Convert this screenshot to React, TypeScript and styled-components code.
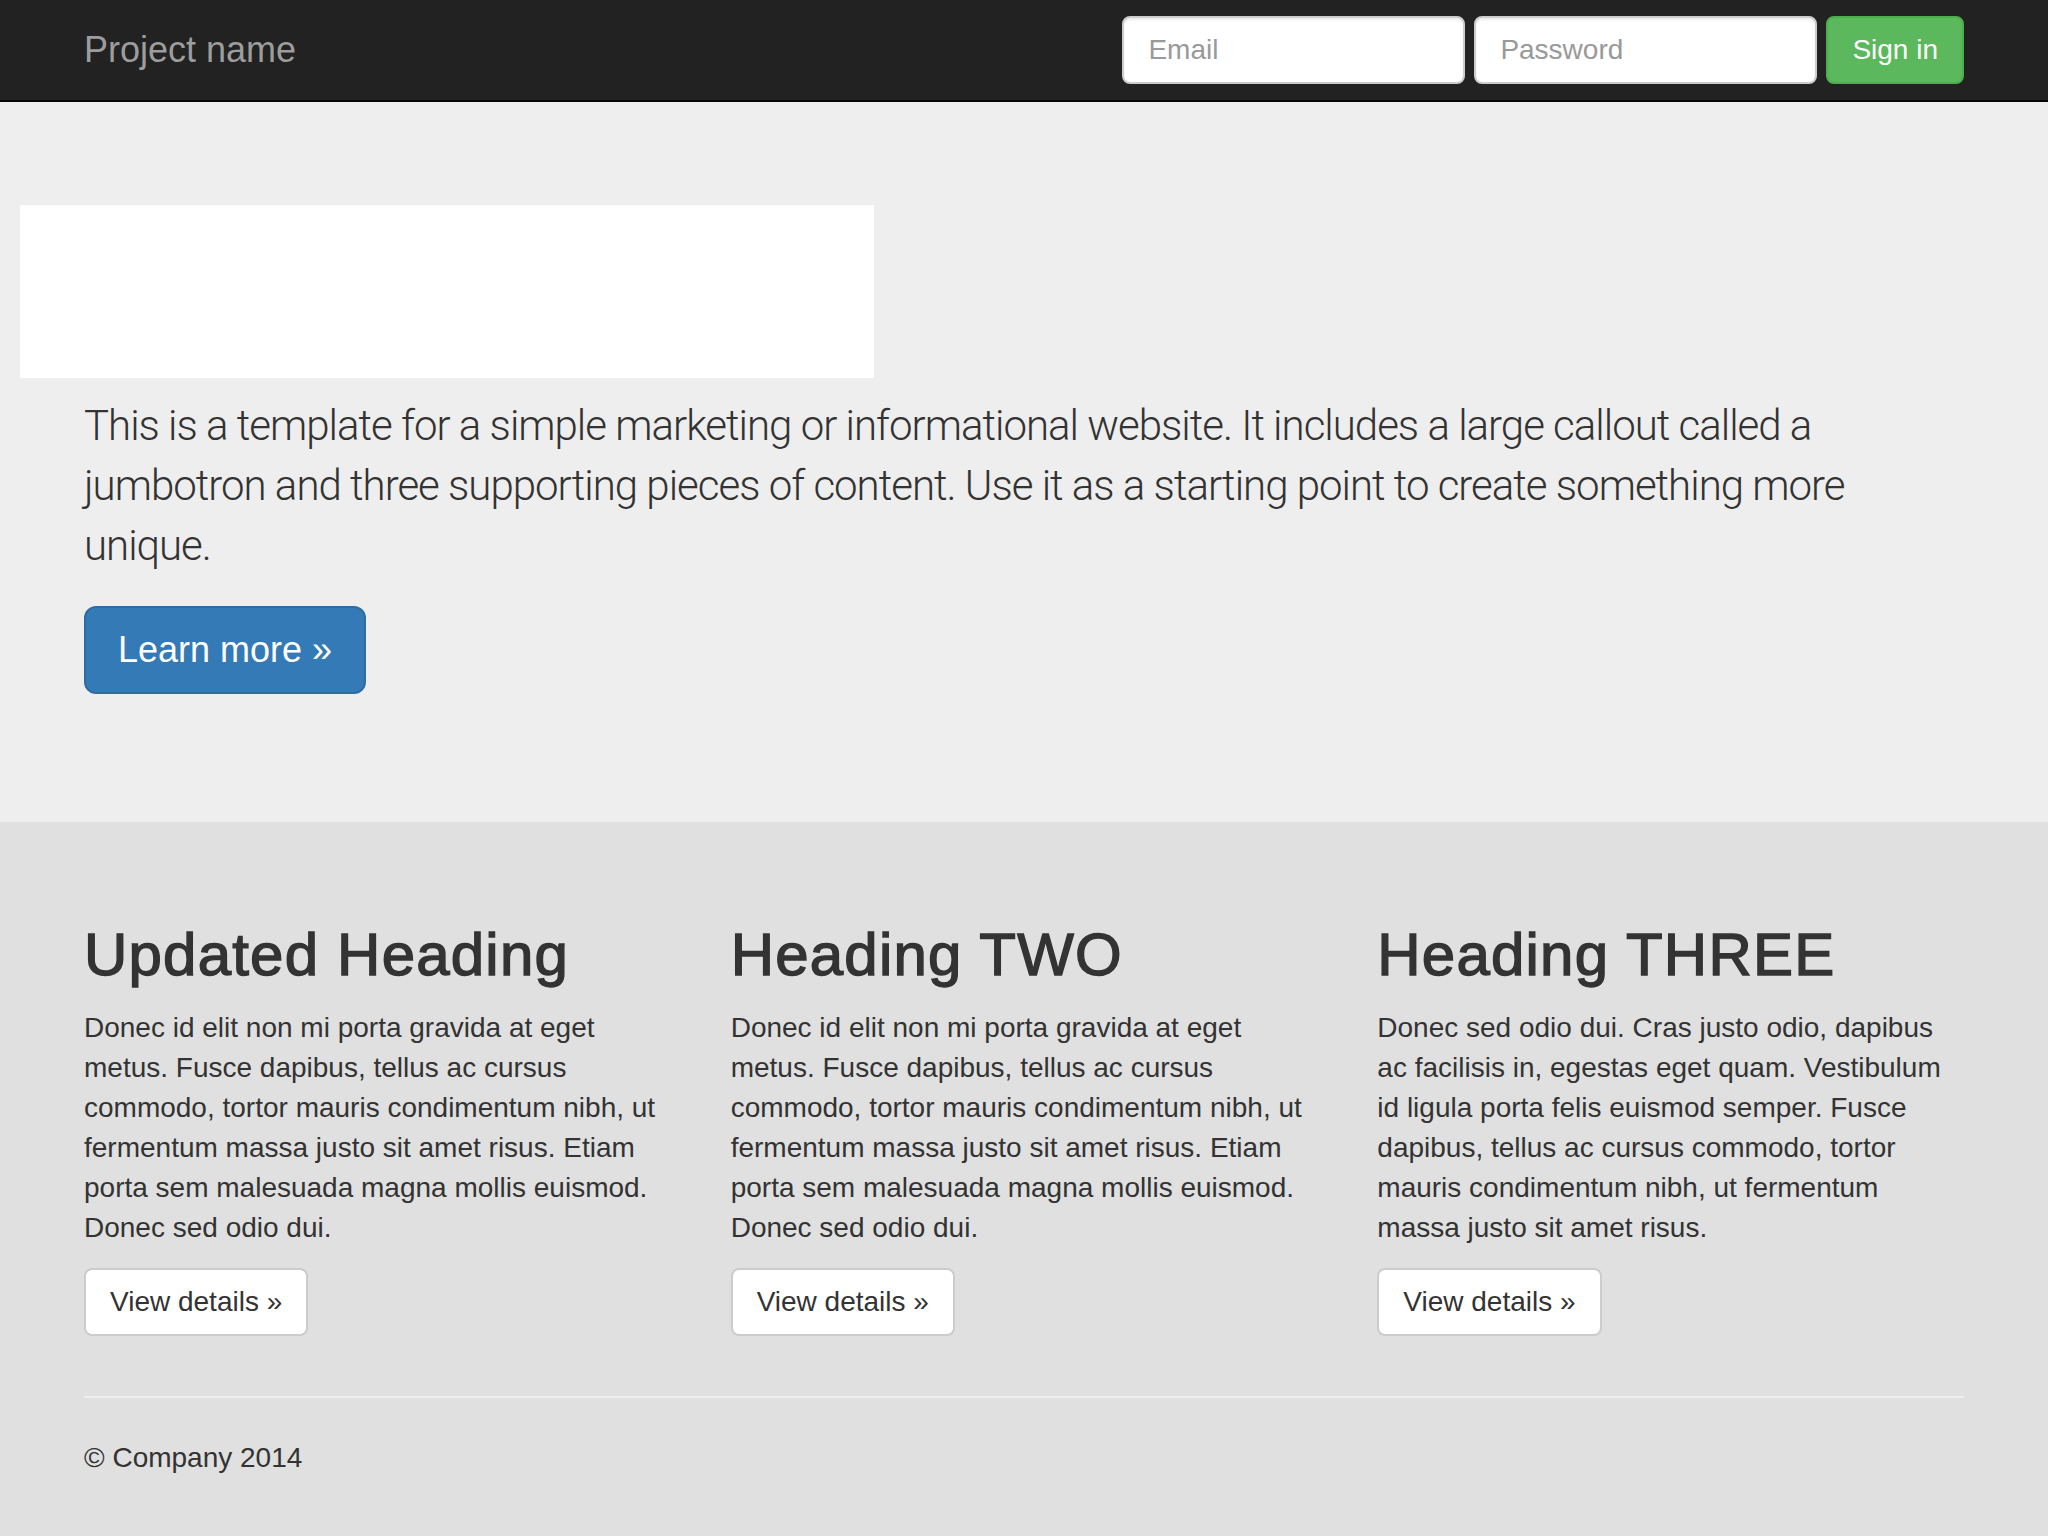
import React from "react";
import styled, { createGlobalStyle } from "styled-components";

const GlobalStyle = createGlobalStyle`
  html, body {
    margin: 0;
    padding: 0;
  }
  body {
    background: #e0e0e0;
    font-family: "Liberation Sans", Helvetica, Arial, sans-serif;
    font-size: 28px;
    line-height: 40px;
    color: #333;
  }
  * { box-sizing: border-box; }
`;

const Navbar = styled.nav`
  height: 102px;
  background: #222;
  border-bottom: 2px solid #080808;
`;

const Container = styled.div`
  width: 1940px;
  margin: 0 auto;
  padding: 0 30px;
`;

const NavInner = styled(Container)`
  display: flex;
  justify-content: space-between;
  align-items: flex-start;
`;

const Brand = styled.a`
  display: block;
  padding: 30px 0;
  font-size: 36px;
  line-height: 40px;
  color: #9d9d9d;
  text-decoration: none;
`;

const NavForm = styled.form`
  display: flex;
  gap: 9px;
  margin-top: 16px;
`;

const Input = styled.input`
  width: 343px;
  height: 68px;
  padding: 12px 24px;
  font-family: inherit;
  font-size: 28px;
  line-height: 40px;
  color: #555;
  background: #fff;
  border: 2px solid #ccc;
  border-radius: 8px;
  box-shadow: inset 0 2px 2px rgba(0, 0, 0, 0.075);
  outline: none;
  &::placeholder {
    color: #999;
  }
`;

const Button = styled.button<{ $variant: "success" | "primary" | "default"; $lg?: boolean }>`
  display: inline-block;
  font-family: inherit;
  cursor: pointer;
  border-style: solid;
  border-width: 2px;
  white-space: nowrap;
  ${(p) =>
    p.$lg
      ? `
    height: 88px;
    padding: 20px 32px;
    font-size: 36px;
    line-height: 44px;
    border-radius: 12px;
  `
      : `
    height: 68px;
    padding: 12px 24px;
    font-size: 28px;
    line-height: 40px;
    border-radius: 8px;
  `}
  ${(p) =>
    p.$variant === "success"
      ? `background: #5cb85c; border-color: #4cae4c; color: #fff;`
      : p.$variant === "primary"
      ? `background: #337ab7; border-color: #2e6da4; color: #fff;`
      : `background: #fff; border-color: #ccc; color: #333;`}
`;

const Jumbotron = styled.section`
  background: #eee;
  padding: 94px 0 96px;
  margin-bottom: 60px;
`;

const Placeholder = styled.div`
  width: 854px;
  height: 173px;
  margin: 9px 0 0 20px;
  background: #fff;
`;

const Lead = styled.p`
  margin: 18px 0 30px;
  font-family: Roboto, "Liberation Sans", sans-serif;
  font-weight: 300;
  font-size: 42px;
  line-height: 60px;
  letter-spacing: -1px;
  color: #333;
`;

const ButtonLine = styled.div<{ $mb: number }>`
  display: flex;
  margin-bottom: ${(p) => p.$mb}px;
`;

const Row = styled.div`
  display: grid;
  grid-template-columns: repeat(3, 1fr);
  margin: 0 -30px;
`;

const Col = styled.div`
  padding: 0 30px;
`;

const Heading = styled.h2`
  margin: 40px 0 20px;
  font-size: 60px;
  line-height: 66px;
  font-weight: 400;
  letter-spacing: 1.2px;
  -webkit-text-stroke: 1.4px #333;
  color: #333;
`;

const Text = styled.p`
  margin: 0 0 20px;
`;

const Rule = styled.hr`
  margin: 42px 0 40px;
  border: 0;
  border-top: 2px solid #eee;
`;

const Footer = styled.footer`
  padding-bottom: 60px;
  p {
    margin: 0;
  }
`;

const columns = [
  {
    title: "Updated Heading",
    text:
      "Donec id elit non mi porta gravida at eget metus. Fusce dapibus, tellus ac cursus commodo, tortor mauris condimentum nibh, ut fermentum massa justo sit amet risus. Etiam porta sem malesuada magna mollis euismod. Donec sed odio dui.",
  },
  {
    title: "Heading TWO",
    text:
      "Donec id elit non mi porta gravida at eget metus. Fusce dapibus, tellus ac cursus commodo, tortor mauris condimentum nibh, ut fermentum massa justo sit amet risus. Etiam porta sem malesuada magna mollis euismod. Donec sed odio dui.",
  },
  {
    title: "Heading THREE",
    text:
      "Donec sed odio dui. Cras justo odio, dapibus ac facilisis in, egestas eget quam. Vestibulum id ligula porta felis euismod semper. Fusce dapibus, tellus ac cursus commodo, tortor mauris condimentum nibh, ut fermentum massa justo sit amet risus.",
  },
];

export default function App() {
  return (
    <>
      <GlobalStyle />
      <Navbar>
        <NavInner>
          <Brand href="#">Project name</Brand>
          <NavForm onSubmit={(e) => e.preventDefault()}>
            <Input type="text" placeholder="Email" />
            <Input type="password" placeholder="Password" />
            <Button type="submit" $variant="success">
              Sign in
            </Button>
          </NavForm>
        </NavInner>
      </Navbar>
      <Jumbotron>
        <Placeholder />
        <Container>
          <Lead>
            This is a template for a simple marketing or informational website. It includes a large callout
            called a jumbotron and three supporting pieces of content. Use it as a starting point to create
            something more unique.
          </Lead>
          <ButtonLine $mb={32}>
            <Button $variant="primary" $lg>
              Learn more »
            </Button>
          </ButtonLine>
        </Container>
      </Jumbotron>
      <Container>
        <Row>
          {columns.map((c) => (
            <Col key={c.title}>
              <Heading>{c.title}</Heading>
              <Text>{c.text}</Text>
              <ButtonLine $mb={18}>
                <Button $variant="default">View details »</Button>
              </ButtonLine>
            </Col>
          ))}
        </Row>
        <Rule />
        <Footer>
          <p>© Company 2014</p>
        </Footer>
      </Container>
    </>
  );
}
